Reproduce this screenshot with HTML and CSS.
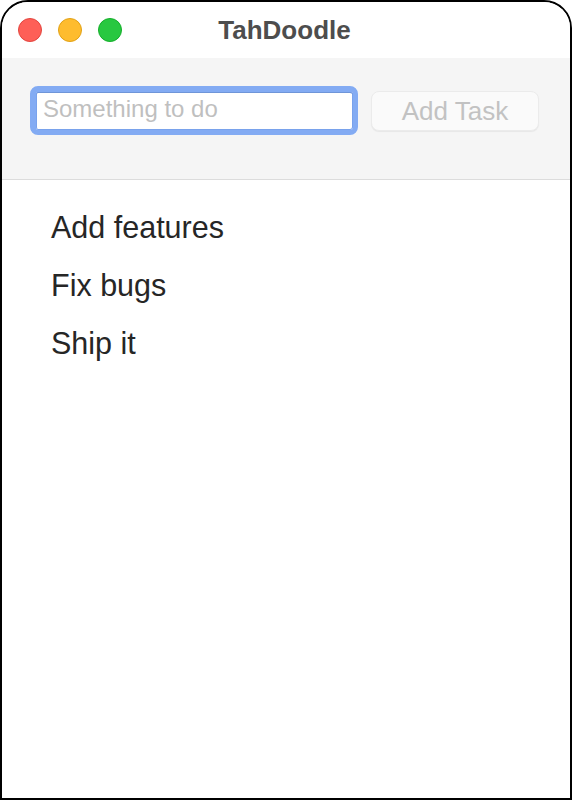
FILE: index.html
```html
<!DOCTYPE html>
<html>
<head>
<meta charset="utf-8">
<link rel="stylesheet" href="styles.css">
</head>
<body>
<div class="window">
  <div class="titlebar">
    <div class="lights">
      <span class="light red"></span>
      <span class="light yellow"></span>
      <span class="light green"></span>
    </div>
    <div class="title">TahDoodle</div>
  </div>
  <div class="toolbar">
    <div class="input"><span class="placeholder">Something to do</span></div>
    <button class="btn">Add Task</button>
  </div>
  <ul class="tasks">
    <li>Add features</li>
    <li>Fix bugs</li>
    <li>Ship it</li>
  </ul>
</div>
</body>
</html>
```
FILE: styles.css
```css
html, body { margin: 0; padding: 0; background: #fff; }
body { font-family: "Liberation Sans", Arial, sans-serif; }
.window {
  width: 572px;
  height: 800px;
  box-sizing: border-box;
  border: 2px solid #000;
  border-radius: 28px 28px 0 0;
  overflow: hidden;
  background: #fff;
  display: flex;
  flex-direction: column;
}
.titlebar {
  height: 56px;
  position: relative;
  display: flex;
  align-items: center;
  justify-content: center;
  background: #fff;
}
.lights {
  position: absolute;
  left: 16px;
  top: 16px;
  display: flex;
  gap: 16px;
}
.light {
  width: 24px;
  height: 24px;
  border-radius: 50%;
  box-sizing: border-box;
}
.red { background: #fe5f57; border: 1px solid #e2463f; }
.yellow { background: #febc2e; border: 1px solid #e1a116; }
.green { background: #28c840; border: 1px solid #14ae2a; }
.title {
  font-weight: bold;
  font-size: 26px;
  color: #4d4d4d;
  margin-top: 1px;
  margin-right: 3px;
}
.toolbar {
  background: #f5f5f5;
  border-bottom: 1px solid #dcdcdc;
  height: 121px;
  box-sizing: content-box;
  padding: 0 0 0 28px;
  display: flex;
  align-items: flex-start;
  gap: 13px;
}
.input {
  margin-top: 28px;
  width: 328px;
  height: 49px;
  box-sizing: border-box;
  border: 6px solid #83abf3;
  border-bottom-width: 5px;
  border-right-width: 5px;
  border-radius: 8px;
  background: #fff;
  display: flex;
  align-items: center;
  padding-left: 7px;
  box-shadow: inset 0 1px 0 0 #6f95d8, inset 0 0 0 1px #79a2ec;
}
.placeholder {
  font-size: 24px;
  color: #bfbfbf;
  line-height: 1;
  margin-top: -4px;
}
.btn {
  margin-top: 33px;
  width: 168px;
  height: 40px;
  background: #fafafa;
  border: 1px solid #ebebeb;
  border-radius: 8px;
  box-shadow: 0 1px 1px rgba(0,0,0,0.06);
  font-family: "Liberation Sans", Arial, sans-serif;
  font-size: 26px;
  color: #c2c2c2;
  padding: 0;
  line-height: 1;
}
.tasks {
  list-style: none;
  margin: 0;
  padding: 18px 0 0 49px;
}
.tasks li {
  font-size: 30.5px;
  line-height: 58px;
  color: #262626;
}
```
